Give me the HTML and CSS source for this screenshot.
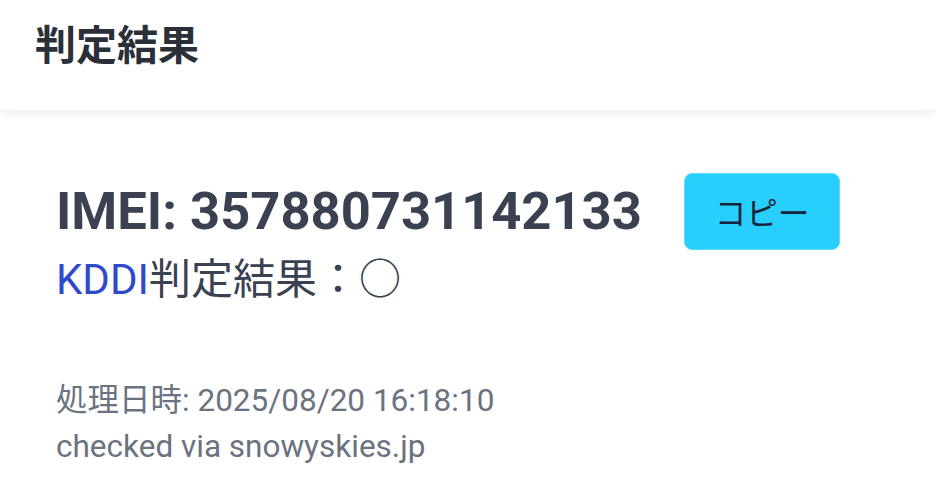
FILE: index.html
```html
<!DOCTYPE html>
<html lang="ja">
<head>
  <meta charset="UTF-8" />
  <title>判定結果</title>
  <link rel="stylesheet" href="styles.css">
</head>
<body>
  <header class="topbar">
    <h1 class="title">判定結果</h1>
  </header>

  <main class="content">
    <div class="imei-row">
      <h2 class="imei">IMEI: 357880731142133</h2>
      <button class="copy-btn">コピー</button>
    </div>
    <p class="verdict"><span class="carrier">KDDI</span>判定結果：○</p>

    <div class="meta">
      <p>処理日時: 2025/08/20 16:18:10</p>
      <p>checked via snowyskies.jp</p>
    </div>
  </main>
</body>
</html>
```

FILE: styles.css
```css
body {
  margin: 0;
  background-color: #fff;
  font-family: Roboto, "Noto Sans CJK JP", sans-serif;
  color: #374151;
}
.topbar {
  height: 110px;
  box-sizing: border-box;
  padding: 18px 35px 0;
  background-color: #fff;
  box-shadow: 0 3px 10px rgba(0, 0, 0, 0.09);
}
.title {
  margin: 0;
  font-size: 41px;
  line-height: 56px;
  font-weight: 700;
  color: #2b2f38;
}
.content {
  padding: 62px 56px 0;
}
.imei-row {
  display: flex;
  align-items: center;
  gap: 42px;
}
.imei {
  margin: 0;
  font-size: 52.5px;
  line-height: 78px;
  font-weight: 700;
  color: #3a4150;
}
.copy-btn {
  padding: 0 30px;
  height: 77px;
  border: 1px solid #5ddcfd;
  border-radius: 8px;
  background-color: #29cffc;
  color: #17233a;
  font-family: "Noto Sans CJK JP", sans-serif;
  font-size: 31.5px;
}
.verdict {
  margin: 0;
  font-size: 42px;
  line-height: 60px;
  color: #3a4150;
}
.carrier {
  color: #2e4acb;
}
.meta {
  margin-top: 68px;
  font-size: 31.5px;
  color: #6b7280;
}
.meta p {
  margin: 0;
  line-height: 46px;
}
```
